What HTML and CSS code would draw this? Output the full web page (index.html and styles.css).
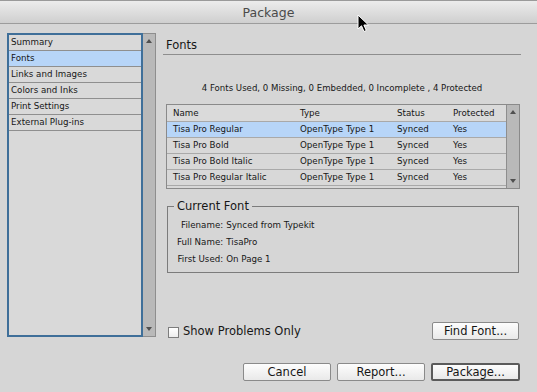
FILE: index.html
```html
<!DOCTYPE html>
<html lang="en">
<head>
    <meta charset="UTF-8">
    <title>Package</title>
    <link rel="stylesheet" href="styles.css">
</head>
<body>
    <div class="window">
        <div class="titlebar">Package</div>

        <div class="main">
            <div class="sidebar">
                <ul class="nav">
                    <li class="nav-item">Summary</li>
                    <li class="nav-item active">Fonts</li>
                    <li class="nav-item">Links and Images</li>
                    <li class="nav-item">Colors and Inks</li>
                    <li class="nav-item">Print Settings</li>
                    <li class="nav-item">External Plug-ins</li>
                </ul>
                <div class="scrollbar">
                    <span class="arrow up"></span>
                    <span class="arrow down"></span>
                </div>
            </div>

            <div class="panel">
                <div class="panel-title">Fonts</div>
                <div class="summary">4 Fonts Used, 0 Missing, 0 Embedded, 0 Incomplete , 4 Protected</div>

                <div class="table">
                    <div class="rows">
                        <div class="row head">
                            <span>Name</span><span>Type</span><span>Status</span><span>Protected</span>
                        </div>
                        <div class="row selected">
                            <span>Tisa Pro Regular</span><span>OpenType Type 1</span><span>Synced</span><span>Yes</span>
                        </div>
                        <div class="row">
                            <span>Tisa Pro Bold</span><span>OpenType Type 1</span><span>Synced</span><span>Yes</span>
                        </div>
                        <div class="row">
                            <span>Tisa Pro Bold Italic</span><span>OpenType Type 1</span><span>Synced</span><span>Yes</span>
                        </div>
                        <div class="row">
                            <span>Tisa Pro Regular Italic</span><span>OpenType Type 1</span><span>Synced</span><span>Yes</span>
                        </div>
                    </div>
                    <div class="scrollbar">
                        <span class="arrow up"></span>
                        <span class="arrow down"></span>
                    </div>
                </div>

                <fieldset class="group">
                    <legend>Current Font</legend>
                    <div class="info">
                        <span class="label">Filename:</span><span>Synced from Typekit</span>
                        <span class="label">Full Name:</span><span>TisaPro</span>
                        <span class="label">First Used:</span><span>On Page 1</span>
                    </div>
                </fieldset>

                <div class="panel-bottom">
                    <label class="check"><span class="box"></span>Show Problems Only</label>
                    <button class="btn find">Find Font...</button>
                </div>
            </div>
        </div>

        <div class="footer">
            <button class="btn">Cancel</button>
            <button class="btn">Report...</button>
            <button class="btn default">Package...</button>
        </div>

        <svg class="cursor" width="13" height="19" viewBox="0 0 13 19">
            <path d="M1 1 L1 15 L4.5 11.8 L7 17.5 L9.3 16.5 L6.9 11 L11.5 11 Z" fill="#000" stroke="#fff" stroke-width="1"/>
        </svg>
    </div>
</body>
</html>
```

FILE: styles.css
```css
:root {
    --bg: #d6d6d6;
    --text: #161616;
    --line: #8c8c8c;
    --select: #b7d5f8;
    --ring: #3f6f99;
    --track: #b9b9b9;
}

* {
    box-sizing: border-box;
}

body {
    margin: 0;
    padding: 0;
    background-color: var(--bg);
    font-family: 'DejaVu Sans', Verdana, sans-serif;
    color: var(--text);
}

.window {
    position: relative;
    width: 537px;
    height: 392px;
    overflow: hidden;
    background-color: var(--bg);
}

.titlebar {
    height: 24px;
    line-height: 23px;
    text-align: center;
    font-size: 12.5px;
    color: #4a4a4a;
    border-top: 1px solid #9a9a9a;
    border-bottom: 1px solid #9c9c9c;
    background: linear-gradient(#ececec, #cfcfcf);
}

.main {
    display: flex;
    align-items: flex-start;
    height: 316px;
    padding: 9px 16px 0 7px;
}

/* Левый список */
.sidebar {
    display: flex;
    width: 149px;
    height: 304px;
}

.nav {
    flex: 1;
    margin: 0;
    padding: 0;
    list-style: none;
    border: 2px solid var(--ring);
    background-color: #d9d9d9;
}

.nav-item {
    height: 16px;
    line-height: 15px;
    padding-left: 2px;
    font-size: 8.7px;
    border-bottom: 1px solid #8f8f8f;
}

.nav-item.active {
    background-color: var(--select);
}

.scrollbar {
    position: relative;
    width: 13px;
    background-color: var(--track);
    border: 1px solid #8e8e8e;
}

.sidebar .scrollbar {
    border-left: none;
}

.arrow {
    position: absolute;
    left: 3px;
    width: 0;
    height: 0;
    border-left: 3px solid transparent;
    border-right: 3px solid transparent;
}

.arrow.up {
    top: 5px;
    border-bottom: 4px solid #505050;
}

.arrow.down {
    bottom: 5px;
    border-top: 4px solid #505050;
}

/* Правая панель */
.panel {
    flex: 1;
    display: flex;
    flex-direction: column;
    height: 307px;
    margin-left: 7px;
}

.panel-title {
    padding: 5px 0 2px 3px;
    line-height: 14px;
    font-size: 11.5px;
    border-bottom: 1px solid #8e8e8e;
}

.summary {
    margin-top: 27px;
    line-height: 12px;
    font-size: 8.6px;
    text-align: center;
}

.table {
    display: flex;
    height: 85px;
    margin: 10px 1px 0 3px;
    border: 1px solid #8a8a8a;
    background-color: #d8d8d8;
}

.rows {
    flex: 1;
}

.row {
    display: grid;
    grid-template-columns: 127px 97px 56px 1fr;
    height: 16px;
    line-height: 15px;
    padding-left: 6px;
    font-size: 8.7px;
    border-bottom: 1px solid #a9a9a9;
}

.row.head {
    height: 17px;
    line-height: 16px;
    background-color: #dadada;
}

.row.selected {
    background-color: var(--select);
}

.row span {
    white-space: nowrap;
}

.table .scrollbar {
    border-top: none;
    border-right: none;
    border-bottom: none;
}

.group {
    margin: 10px 2px 0 4px;
    padding: 0 9px 4px 9px;
    border: 1px solid #7c7c7c;
    min-width: 0;
}

.group legend {
    padding: 0 3px;
    margin-left: -3px;
    line-height: 14px;
    font-size: 11.5px;
}

.info {
    display: grid;
    grid-template-columns: max-content 1fr;
    column-gap: 3px;
    padding-top: 4px;
    line-height: 17px;
    font-size: 8.7px;
}

.info .label {
    text-align: right;
}

.panel-bottom {
    display: flex;
    align-items: center;
    justify-content: space-between;
    margin-top: auto;
    height: 18px;
}

.check {
    display: flex;
    align-items: center;
    margin-left: 5px;
    font-size: 11.5px;
}

.check .box {
    width: 11px;
    height: 11px;
    margin-right: 4px;
    margin-top: 2px;
    border: 1px solid #7d7d7d;
    background: linear-gradient(#ffffff, #ededed);
}

/* Кнопки */
.btn {
    height: 18px;
    width: 88px;
    padding: 0;
    font-family: 'DejaVu Sans', Verdana, sans-serif;
    font-size: 11.5px;
    color: var(--text);
    border: 1px solid #8a8a8a;
    border-radius: 2px;
    background: linear-gradient(#fdfdfd, #e9e9e9);
}

.btn.find {
    width: 87px;
    margin-right: 2px;
}

.btn.default {
    width: 89px;
    border: 2px solid #5b5b5b;
}

.footer {
    display: flex;
    justify-content: flex-end;
    gap: 6px;
    padding: 23px 17px 0 0;
}

.cursor {
    position: absolute;
    left: 357px;
    top: 14px;
}
```
